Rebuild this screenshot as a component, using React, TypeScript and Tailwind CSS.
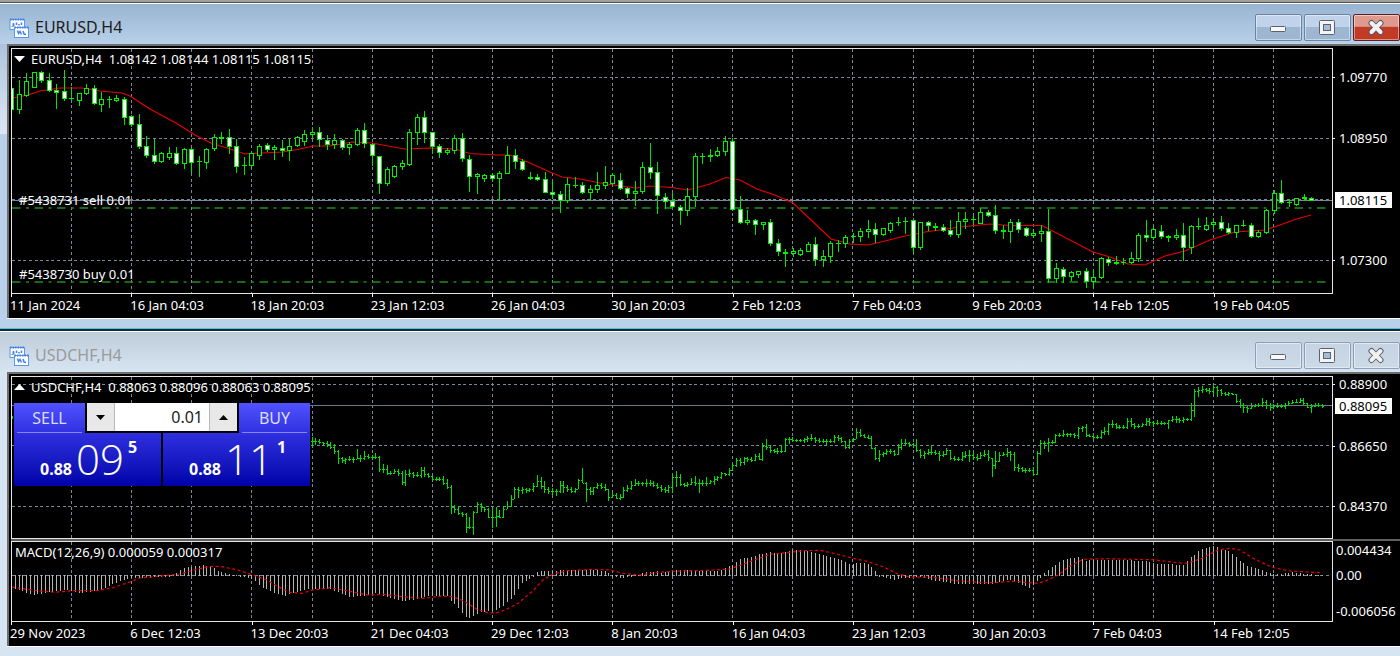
import React from "react";

type Point = [number, number];
/** high, body top, body bottom, low, filled */
type Candle = [number, number, number, number, 0 | 1];
/** high, low, close, in thirds of a chart unit */
type Bar = [number, number, number];

const CANDLES: Candle[] = [
  [61, 88, 109, 110, 1], [80, 94, 109, 113, 0], [73, 81, 95, 96, 0], [72, 72, 87, 87, 0],
  [71, 72, 80, 82, 1], [73, 80, 90, 91, 1], [84, 90, 92, 108, 1], [70, 91, 98, 100, 1],
  [87, 98, 98, 99, 0], [93, 93, 100, 105, 0], [84, 88, 93, 94, 0], [85, 88, 103, 104, 1],
  [92, 99, 104, 111, 0], [96, 99, 99, 107, 0], [95, 98, 100, 101, 0], [97, 99, 117, 124, 1],
  [115, 116, 124, 126, 1], [114, 124, 146, 148, 1], [136, 146, 155, 157, 1], [139, 155, 161, 163, 1],
  [152, 153, 161, 162, 0], [147, 153, 157, 159, 0], [147, 153, 163, 164, 1], [148, 149, 163, 168, 0],
  [148, 149, 162, 172, 1], [156, 161, 161, 176, 0], [148, 149, 162, 168, 0], [134, 137, 148, 150, 0],
  [132, 137, 138, 143, 0], [129, 137, 146, 153, 1], [139, 146, 166, 172, 1], [157, 165, 165, 174, 0],
  [152, 153, 165, 168, 0], [144, 146, 155, 159, 0], [143, 145, 149, 151, 1], [145, 147, 149, 159, 0],
  [140, 148, 150, 156, 1], [139, 146, 150, 160, 0], [136, 137, 145, 146, 0], [130, 134, 141, 145, 0],
  [127, 132, 134, 137, 0], [127, 132, 139, 146, 1], [135, 140, 144, 149, 1], [134, 140, 144, 148, 0],
  [139, 140, 147, 149, 1], [142, 144, 147, 154, 0], [128, 130, 144, 145, 0], [123, 130, 143, 147, 1],
  [143, 144, 155, 165, 1], [156, 156, 183, 193, 1], [167, 169, 183, 185, 0], [165, 166, 176, 177, 0],
  [160, 163, 166, 169, 0], [129, 132, 164, 165, 0], [114, 117, 132, 144, 0], [111, 117, 132, 142, 1],
  [132, 132, 146, 152, 1], [144, 146, 152, 157, 1], [148, 150, 152, 154, 0], [135, 138, 150, 153, 0],
  [133, 138, 158, 161, 1], [155, 159, 176, 191, 1], [173, 174, 176, 193, 0], [174, 175, 178, 181, 0],
  [173, 175, 178, 180, 1], [171, 173, 178, 200, 0], [146, 155, 173, 173, 0], [149, 155, 161, 168, 1],
  [159, 161, 169, 170, 1], [172, 177, 178, 179, 1], [174, 177, 179, 180, 1], [172, 179, 192, 192, 1],
  [181, 192, 194, 198, 1], [191, 194, 200, 212, 1], [178, 184, 200, 202, 0], [177, 185, 185, 187, 0],
  [182, 185, 192, 193, 1], [185, 189, 192, 200, 0], [172, 185, 189, 192, 0], [166, 182, 185, 188, 0],
  [173, 175, 183, 184, 0], [173, 180, 188, 189, 1], [187, 188, 193, 197, 1], [181, 191, 193, 205, 0],
  [162, 167, 191, 193, 0], [143, 167, 172, 178, 1], [162, 172, 195, 213, 1], [193, 197, 201, 208, 1],
  [193, 201, 206, 207, 1], [205, 207, 210, 224, 1], [188, 196, 210, 215, 0], [153, 156, 196, 206, 0],
  [153, 156, 156, 163, 0], [149, 155, 156, 161, 0], [147, 151, 155, 156, 0], [136, 141, 151, 155, 0],
  [138, 141, 209, 210, 1], [196, 209, 222, 223, 1], [210, 220, 222, 224, 0], [219, 220, 224, 234, 1],
  [222, 222, 224, 229, 0], [219, 222, 243, 245, 1], [239, 243, 251, 255, 1], [249, 252, 253, 266, 1],
  [248, 251, 253, 256, 0], [248, 250, 254, 255, 0], [242, 244, 251, 251, 0], [237, 244, 259, 265, 1],
  [250, 256, 259, 266, 0], [241, 243, 256, 262, 0], [240, 243, 243, 251, 0], [235, 237, 243, 247, 0],
  [233, 236, 236, 242, 0], [228, 231, 236, 241, 0], [220, 229, 231, 237, 0], [223, 229, 234, 242, 1],
  [228, 228, 234, 235, 0], [222, 223, 230, 232, 0], [217, 222, 222, 225, 0], [217, 221, 221, 233, 0],
  [220, 220, 247, 252, 1], [222, 222, 247, 249, 0], [221, 222, 225, 230, 1], [223, 226, 227, 230, 0],
  [224, 227, 230, 231, 1], [220, 230, 234, 236, 1], [212, 221, 234, 237, 0], [212, 219, 221, 228, 0],
  [216, 219, 219, 224, 0], [208, 212, 223, 223, 0], [210, 212, 215, 216, 1], [205, 215, 230, 233, 1],
  [225, 230, 231, 238, 1], [219, 222, 231, 242, 0], [219, 222, 229, 232, 1], [227, 228, 235, 236, 1],
  [229, 233, 235, 237, 0], [225, 231, 233, 241, 0], [209, 231, 278, 282, 1], [263, 268, 278, 282, 0],
  [267, 269, 276, 282, 1], [271, 272, 276, 280, 0], [271, 271, 274, 277, 0], [268, 271, 281, 287, 1],
  [269, 277, 281, 287, 0], [257, 258, 277, 278, 0], [257, 259, 262, 265, 1], [256, 262, 263, 264, 1],
  [258, 262, 262, 264, 0], [252, 258, 262, 263, 0], [233, 235, 258, 261, 0], [220, 235, 237, 241, 1],
  [227, 229, 237, 239, 0], [225, 231, 236, 238, 1], [235, 236, 237, 241, 1], [229, 235, 237, 239, 0],
  [223, 235, 247, 260, 1], [225, 226, 247, 253, 0], [218, 226, 226, 229, 0], [217, 225, 229, 230, 0],
  [218, 222, 224, 228, 0], [216, 222, 228, 230, 1], [223, 228, 232, 233, 1], [225, 225, 232, 237, 0],
  [220, 225, 225, 226, 0], [223, 225, 236, 237, 1], [230, 232, 236, 237, 0], [209, 210, 232, 233, 0],
  [190, 193, 210, 213, 0], [180, 193, 202, 203, 1], [199, 202, 202, 206, 0], [198, 198, 204, 205, 0],
  [194, 197, 198, 200, 1], [197, 198, 200, 200, 1],
];

const AVERAGE: Point[] = [
  [12, 98], [28, 95], [40, 91], [60, 88], [82, 88], [100, 91], [122, 93], [130, 96], [150, 109], [176, 123],
  [195, 135], [211, 143], [230, 149], [245, 154], [262, 153], [283, 152], [300, 149], [313, 146], [330, 146],
  [352, 142], [372, 143], [388, 146], [405, 149], [430, 148], [455, 149], [470, 153.5], [497, 155], [510, 155],
  [530, 163], [550, 172], [562, 177], [580, 179], [600, 183], [620, 186], [637, 188], [650, 186], [672, 187.5],
  [688, 190], [710, 184], [726, 177.5], [740, 180], [757, 189], [775, 195], [793, 203], [810, 219], [831, 239],
  [850, 244], [868, 245], [885, 241], [905, 236], [925, 232], [940, 230], [960, 227], [990, 224], [1010, 225.5],
  [1042, 225.5], [1070, 240], [1093, 252], [1110, 257], [1128, 264], [1145, 265], [1165, 256], [1185, 251],
  [1210, 240], [1235, 232], [1265, 230], [1280, 225], [1295, 219.5], [1311, 215],
];

const FIRST_BAR = 80;
const BARS: Bar[] = [
  [200, 230, 212], [205, 226, 214], [208, 223, 216], [215, 226, 220], [212, 230, 222],
  [217, 237, 230], [222, 253, 243], [240, 283, 265], [262, 278, 270], [265, 282, 268], [258, 272, 266],
  [260, 278, 266], [236, 268, 264], [255, 275, 265], [243, 270, 258], [252, 268, 262], [256, 270, 262],
  [250, 268, 260], [258, 307, 297], [282, 310, 298], [286, 315, 308], [303, 316, 309], [298, 312, 304],
  [296, 319, 310], [303, 346, 335], [300, 348, 312], [298, 322, 310], [305, 325, 314], [307, 322, 315],
  [292, 325, 300], [292, 322, 312], [308, 325, 318], [315, 332, 326], [320, 334, 327], [320, 334, 326],
  [318, 346, 340], [326, 356, 352], [345, 432, 410], [405, 430, 418], [408, 436, 430], [426, 442, 433],
  [430, 490, 470], [440, 477, 470], [424, 494, 427], [396, 428, 402], [400, 427, 410], [410, 426, 416],
  [414, 443, 440], [410, 475, 440], [412, 472, 438], [420, 445, 440], [412, 445, 418], [392, 418, 408],
  [376, 412, 388], [352, 388, 358], [352, 385, 360], [350, 372, 358], [355, 370, 360], [354, 366, 358],
  [340, 366, 348], [315, 350, 334], [320, 356, 348], [332, 370, 358], [350, 372, 362], [354, 376, 364],
  [358, 378, 362], [334, 370, 345], [334, 368, 350], [345, 366, 356], [352, 370, 364], [354, 370, 358],
  [326, 358, 330], [295, 340, 338], [336, 396, 358], [350, 375, 362], [350, 374, 352], [338, 358, 345],
  [338, 358, 350], [342, 362, 358], [356, 392, 380], [370, 385, 376], [370, 388, 384], [372, 390, 380],
  [352, 384, 360], [344, 365, 354], [332, 360, 345], [328, 348, 340], [334, 348, 340], [335, 348, 340],
  [328, 350, 340], [330, 348, 340], [332, 352, 344], [338, 356, 350], [345, 367, 358], [350, 368, 360],
  [346, 368, 352], [315, 370, 320], [303, 350, 320], [312, 348, 342], [338, 350, 345], [336, 350, 342],
  [324, 346, 336], [318, 348, 340], [326, 368, 338], [330, 348, 340], [322, 348, 338], [330, 342, 334],
  [318, 344, 326], [318, 332, 322], [305, 328, 310], [308, 318, 312], [294, 318, 300], [280, 302, 285],
  [264, 292, 270], [264, 287, 275], [260, 286, 264], [260, 275, 268], [260, 276, 270], [252, 272, 258],
  [250, 270, 268], [220, 272, 228], [208, 240, 230], [225, 248, 240], [236, 250, 244], [234, 252, 242],
  [225, 250, 242], [205, 245, 208], [200, 222, 207], [202, 215, 210], [206, 216, 211], [206, 216, 211],
  [203, 218, 207], [198, 216, 205], [193, 212, 204], [200, 218, 210], [205, 218, 213], [208, 218, 214],
  [206, 228, 212], [206, 220, 212], [196, 220, 200], [194, 212, 205], [202, 218, 213], [212, 237, 232],
  [206, 237, 212], [203, 216, 206], [174, 208, 186], [178, 202, 194], [192, 204, 200], [194, 206, 203],
  [198, 236, 235], [230, 270, 265], [240, 275, 252], [246, 262, 250], [236, 256, 242], [238, 252, 243],
  [240, 258, 252], [222, 254, 232], [208, 240, 220], [208, 226, 220], [216, 230, 223], [218, 228, 224],
  [208, 246, 240], [236, 264, 256], [242, 266, 248], [236, 254, 245], [225, 254, 246], [240, 256, 250],
  [242, 272, 256], [244, 262, 252], [234, 256, 240], [240, 270, 265], [258, 274, 267], [260, 272, 266],
  [246, 272, 258], [242, 264, 254], [240, 275, 256], [250, 270, 260], [252, 272, 263], [246, 268, 254],
  [240, 262, 253], [240, 274, 262], [265, 320, 285], [242, 297, 272], [246, 276, 254], [246, 258, 252],
  [235, 260, 245], [243, 272, 252], [245, 302, 290], [282, 305, 295], [292, 306, 300], [295, 308, 300],
  [294, 306, 300], [294, 314, 312], [242, 316, 250], [210, 255, 220], [214, 238, 220], [204, 246, 216],
  [210, 222, 215], [193, 220, 196], [188, 200, 195], [180, 200, 193], [188, 202, 192], [188, 200, 192],
  [188, 204, 196], [170, 206, 175], [168, 186, 172], [162, 200, 196], [192, 202, 198], [193, 206, 200],
  [195, 206, 201], [180, 206, 186], [172, 196, 184], [158, 195, 162], [150, 175, 163], [160, 178, 172],
  [164, 178, 170], [166, 178, 170], [145, 178, 152], [145, 170, 162], [158, 176, 167], [162, 174, 167],
  [158, 172, 163], [145, 168, 153], [145, 168, 156], [152, 172, 158], [150, 166, 158], [154, 164, 159],
  [156, 166, 160], [150, 176, 150], [138, 156, 146], [138, 158, 148], [144, 160, 150], [140, 158, 148],
  [144, 153, 148], [100, 153, 120], [58, 140, 63], [50, 82, 60], [48, 68, 58], [54, 66, 60],
  [54, 72, 62], [45, 72, 50], [48, 80, 60], [57, 78, 70], [65, 78, 72], [66, 78, 70], [68, 76, 72],
  [71, 100, 92], [86, 115, 105], [100, 130, 112], [108, 128, 115], [100, 118, 108], [102, 112, 106],
  [98, 112, 105], [83, 112, 95], [90, 116, 106], [100, 122, 112], [102, 118, 108], [100, 114, 108],
  [102, 114, 108], [100, 118, 105], [93, 108, 98], [90, 102, 95], [88, 100, 95], [85, 100, 90],
  [84, 106, 100], [98, 115, 110], [102, 128, 108], [98, 112, 105], [99, 110, 104], [102, 114, 108],
];

const HISTOGRAM: Point[] = [
  [11, 587], [34, 594], [50, 591], [66, 589], [77, 592], [87, 591], [100, 589], [110, 584], [120, 580],
  [133, 577], [167, 576], [175, 574], [183, 568], [196, 566], [204, 565], [212, 567], [220, 572], [233, 575],
  [247, 576], [255, 580], [260, 585], [273, 592], [285, 594.5], [293, 592], [306, 588], [330, 588], [350, 596],
  [363, 595], [376, 592], [390, 597], [403, 600], [417, 598], [430, 595], [447, 595], [453, 602], [466, 616],
  [470, 617], [480, 611], [496, 609], [503, 605], [512, 597], [522, 582], [530, 577], [534, 575.5], [537, 572],
  [543, 571], [570, 570], [590, 570], [605, 571], [612, 575.6], [620, 577], [637, 575], [643, 572.7], [658, 571],
  [661, 573], [677, 570], [717, 571], [723, 569], [733, 564.3], [740, 559.3], [757, 555], [768, 552], [780, 553.7],
  [790, 550.3], [803, 550], [813, 552.3], [827, 556.7], [840, 560], [849, 564.3], [857, 562.7], [867, 563.3],
  [873, 568.3], [878, 575.3], [893, 578.7], [903, 577], [920, 576], [930, 579], [943, 581], [957, 583], [992, 582.7],
  [1008, 579], [1013, 580], [1030, 587.7], [1037, 580], [1041, 576], [1044, 573], [1056, 564], [1063, 560],
  [1078, 556.7], [1085, 560.7], [1103, 559.7], [1123, 560], [1147, 561.3], [1157, 563.7], [1183, 565],
  [1190, 558.3], [1198, 550.7], [1214, 545.3], [1220, 549], [1230, 551.7], [1240, 560.7], [1248, 566.7],
  [1260, 569.3], [1270, 573.3], [1280, 574], [1293, 572.3], [1303, 574], [1322, 575],
];

const SIGNAL: Point[] = [
  [12, 587], [37, 590.7], [55, 592.3], [73, 590.7], [97, 590.7], [113, 587.7], [127, 583], [140, 578], [160, 576],
  [180, 574], [197, 569.3], [210, 566.3], [220, 566.3], [238, 570], [253, 575], [267, 580], [278, 586.7],
  [290, 592.3], [302, 593.3], [313, 590], [330, 587.7], [350, 591.3], [368, 595], [383, 594.3], [403, 596.7],
  [423, 598.3], [443, 596], [453, 596.7], [465, 601.7], [477, 609.3], [487, 612.3], [495, 613.3], [505, 610],
  [518, 603.3], [532, 591.7], [543, 580], [553, 574], [567, 570.7], [593, 569.3], [610, 570], [623, 573.3],
  [640, 575], [658, 572.3], [680, 571], [710, 570.3], [730, 569], [750, 561.7], [770, 554.3], [787, 552.7],
  [803, 550.7], [820, 550.3], [837, 554], [853, 558.3], [867, 561.3], [883, 566.7], [898, 574], [910, 577],
  [933, 577.3], [957, 580.7], [977, 582.3], [993, 582.7], [1013, 581.3], [1037, 583.3], [1045, 581.3], [1058, 575],
  [1068, 567.3], [1083, 559.3], [1107, 558.7], [1153, 559.7], [1177, 562.7], [1187, 563.3], [1202, 558.3],
  [1218, 550], [1230, 548.3], [1240, 550], [1253, 558.3], [1272, 567.3], [1290, 571], [1322, 572.7],
];

const GRID = Array.from({ length: 21 }, (_, i) => Math.floor(71.6 + i * 60.1));

function valueAt(points: Point[], x: number) {
  const i = points.findIndex(([px]) => px >= x);
  if (i <= 0) return points[i === 0 ? 0 : points.length - 1][1];
  const [x0, y0] = points[i - 1];
  const [x1, y1] = points[i];
  return y0 + ((y1 - y0) * (x - x0)) / (x1 - x0);
}

const toPath = (points: Point[]) => "M" + points.map((p) => p.join(" ")).join("L");

function GridLines({ top, bottom, rows }: { top: number; bottom: number; rows: number[] }) {
  return (
    <g stroke="#778899" strokeDasharray="3 2.64" shapeRendering="crispEdges">
      {GRID.map((x) => (
        <path key={x} d={`M${x + 0.5} ${top}V${bottom}`} />
      ))}
      {rows.map((y) => (
        <path key={y} d={`M12 ${y + 0.5}H1332`} />
      ))}
    </g>
  );
}

function CandleChart() {
  return (
    <svg className="block h-full w-full" viewBox="12 49 1320 244" preserveAspectRatio="none" aria-hidden="true">
      <GridLines top={49} bottom={293} rows={[77, 138, 199, 260]} />
      <path d="M12 200.5H1332" stroke="#778899" shapeRendering="crispEdges" />
      <g stroke="#1f8f1f" strokeWidth="1.5" strokeDasharray="8.5 5.6 2.8 5.6">
        <path d="M12 208H1328" />
        <path d="M12 282H1328" />
      </g>
      <path d={toPath(AVERAGE)} fill="none" stroke="#e80000" strokeWidth="1.2" />
      <g shapeRendering="crispEdges">
        {CANDLES.map(([high, top, bottom, low, filled], i) => {
          const x = Math.floor(11.5 + i * 7.515);
          const h = bottom - top + 1;
          return (
            <g key={i}>
              <rect x={x} y={high} width="1" height={low - high + 1} fill="#00e400" />
              <rect x={x - 2} y={top} width="5" height={h} fill="#00f000" />
              {h > 2 && <rect x={x - 1} y={top + 1} width="3" height={h - 2} fill={filled ? "#fff" : "#000"} />}
            </g>
          );
        })}
      </g>
    </svg>
  );
}

function BarChart() {
  return (
    <svg className="block h-full w-full" viewBox="12 377 1320 161" preserveAspectRatio="none" aria-hidden="true">
      <GridLines top={377} bottom={538} rows={[384, 445, 506]} />
      <path d="M12 405.5H1332" stroke="#66788a" shapeRendering="crispEdges" />
      <g shapeRendering="crispEdges" fill="#00e000">
        <rect x="11" y="416" width="2" height="3" />
        {BARS.map(([high, low, close], i) => {
          const x = Math.floor(11.5 + (FIRST_BAR + i) * 3.757);
          const open = i > 0 ? BARS[i - 1][2] : close;
          const y = (v: number) => Math.round(370 + v / 3);
          return (
            <g key={i}>
              <rect x={x} y={y(high)} width="1" height={y(low) - y(high)} />
              <rect x={x - 1} y={y(Math.min(Math.max(open, high), low - 2))} width="1" height="1" />
              <rect x={x + 1} y={y(close)} width="1" height="1" />
            </g>
          );
        })}
      </g>
    </svg>
  );
}

function MacdChart() {
  return (
    <svg className="block h-full w-full" viewBox="12 542 1320 79" preserveAspectRatio="none" aria-hidden="true">
      <GridLines top={542} bottom={621} rows={[575]} />
      <g fill="#b4b4b4" shapeRendering="crispEdges">
        {Array.from({ length: 350 }, (_, i) => {
          const x = Math.floor(11.5 + i * 3.757);
          const y = Math.round(valueAt(HISTOGRAM, x));
          return <rect key={i} x={x} y={Math.min(y, 575)} width="1" height={Math.abs(y - 575) + 1} />;
        })}
      </g>
      <path d={toPath(SIGNAL)} fill="none" stroke="#f00000" strokeWidth="1.2" strokeDasharray="3 2.6" />
    </svg>
  );
}

function WindowIcon() {
  return (
    <svg width="20" height="20" viewBox="0 0 20 20" fill="#fff" aria-hidden="true">
      <rect x="1" y="1.5" width="14.5" height="10" stroke="#5a96f0" />
      <path d="M1 1.5H15.5" stroke="#3f7fe8" strokeWidth="2" strokeDasharray="1.5 1" />
      <path d="M4.5 5V8.500M3.500 7H5.500M7.500 4.500V7M10 6V7.500M12.500 4.500V7" stroke="#3f7fe8" strokeWidth="1.5" />
      <path d="M2.500 8.500H4.500" stroke="#3fbf7f" />
      <rect x="5.500" y="9.500" width="14" height="10" stroke="#5a96f0" />
      <path d="M5.500 9.500H19.500" stroke="#3f7fe8" strokeWidth="2" strokeDasharray="1.500 1" />
      <path d="M8.500 12.500L9.500 15.500L11 13.500L12.500 16.500M14 13L15 16L17 16.500" fill="none" stroke="#3f7fe8" strokeWidth="1.5" />
    </svg>
  );
}

function ControlIcon({ kind }: { kind: "minimize" | "maximize" | "close" }) {
  return (
    <svg width="19" height="17" viewBox="0 0 19 17" fill="none" aria-hidden="true">
      {kind === "minimize" && (
        <rect x="1.500" y="7.500" width="15" height="5" rx="1" fill="#f8f8f8" stroke="#5a6270" />
      )}
      {kind === "maximize" && (
        <>
          <rect x="1.500" y="1.500" width="15" height="14" rx="1" fill="#f4f4f4" stroke="#5a6270" />
          <rect x="5.500" y="5.500" width="7" height="6" fill="#a3bdd8" stroke="#5a6270" />
        </>
      )}
      {kind === "close" && (
        <>
          <path d="M4.500 4L13.500 13M13.500 4L4.500 13" stroke="#565c68" strokeWidth="6" strokeLinecap="round" />
          <path d="M4.500 4L13.500 13M13.500 4L4.500 13" stroke="#f2f2f2" strokeWidth="4" strokeLinecap="round" />
        </>
      )}
    </svg>
  );
}

function TitleBar({ title, active }: { title: string; active: boolean }) {
  const box = "flex h-[27px] w-[47px] items-center justify-center rounded-xs border shadow-[inset_0_0_0_1px_rgba(255,255,255,0.45)]";
  const plain = active
    ? "border-[#6b84a6] bg-linear-to-b from-[#c0d3ea] from-50% to-[#9db6d2] to-50%"
    : "border-[#8f9fb4] bg-linear-to-b from-[#c6d3e2] to-[#ccdae8]";
  const close = active
    ? "border-[#5f1f1c] bg-linear-to-b from-[#df9a8e] from-45% to-[#c03a26] to-50%"
    : plain;
  return (
    <header
      className={`flex h-10 items-end justify-between pb-[3px] pl-[9px] ${
        active
          ? "bg-linear-to-b from-[#99b4d1] to-[#b9d1ea] text-[#1c1c20]"
          : "bg-linear-to-b from-[#bfcddb] to-[#d7e4f2] text-[#9a9a9a]"
      }`}
    >
      <h2 className="flex items-center gap-[6px] text-base leading-[27px]">
        <WindowIcon />
        {title}
      </h2>
      <div className="flex gap-[2px]">
        <button type="button" aria-label="Minimize" className={`${box} ${plain}`}>
          <ControlIcon kind="minimize" />
        </button>
        <button type="button" aria-label="Maximize" className={`${box} ${plain}`}>
          <ControlIcon kind="maximize" />
        </button>
        <button type="button" aria-label="Close" className={`${box} ${close}`}>
          <ControlIcon kind="close" />
        </button>
      </div>
    </header>
  );
}

function TimeAxis({ labels }: { labels: string[] }) {
  return (
    <div className="flex">
      <ol className="-ml-px grid h-6 min-w-0 flex-1 grid-cols-11 whitespace-nowrap">
        {labels.map((label, i) => (
          <li key={i}>
            <span className="ml-px block h-[3px] w-px bg-white" />
            <span className="block leading-4">{label}</span>
          </li>
        ))}
      </ol>
      <div className="w-[67px]" />
    </div>
  );
}

function Tick({ children }: { children: string }) {
  return (
    <li className="flex h-4 items-center gap-1 leading-4">
      <span className="h-px w-[2px] bg-white" />
      {children}
    </li>
  );
}

function Quote({ base, big, small }: { base: string; big: string; small: string }) {
  return (
    <span className="flex h-[53px] w-full items-baseline gap-1 pl-[26px] text-white">
      <span className="text-base leading-5 font-bold">{base}</span>
      <span className="font-['Open_Sans','Noto_Sans',sans-serif] text-[42px] leading-[52px] font-light">{big}</span>
      <span className="self-start pt-1 text-base leading-5 font-bold">{small}</span>
    </span>
  );
}

function TradePanel() {
  const side = "flex h-[83px] min-w-0 flex-1 flex-col bg-linear-to-b from-[#5252ff] via-[#2c2cdc] via-40% to-[#0000a8]";
  const caption = "mx-[3px] h-[30px] w-[65px] border-b border-[#8585f5] text-center text-base leading-[30px] text-[#dcdcff]";
  return (
    <div className="absolute top-[26px] left-[2px] flex w-[296px] gap-[2px] bg-black">
      <button type="button" className={`${side} items-start`}>
        <span className={caption}>SELL</span>
        <Quote base="0.88" big="09" small="5" />
      </button>
      <button type="button" className={`${side} items-end`}>
        <span className={caption}>BUY</span>
        <Quote base="0.88" big="11" small="1" />
      </button>
      <div className="absolute top-0 left-[71px] flex h-[30px] w-[154px] border-x-2 border-b-2 border-black bg-white">
        <button type="button" aria-label="Decrease volume" className="flex w-7 items-center justify-center border-r border-[#b8b8b8] bg-[#e8e8e8]">
          <svg width="9" height="5" viewBox="0 0 9 5" aria-hidden="true">
            <path d="M0 0H9L4.500 5Z" fill="#000" />
          </svg>
        </button>
        <input aria-label="Volume" defaultValue="0.01" className="min-w-0 flex-1 bg-white pr-[6px] text-right text-base text-[#222]" />
        <button type="button" aria-label="Increase volume" className="flex w-7 items-center justify-center border-l border-[#b8b8b8] bg-[#e8e8e8]">
          <svg width="9" height="5" viewBox="0 0 9 5" aria-hidden="true">
            <path d="M0 5H9L4.500 0Z" fill="#000" />
          </svg>
        </button>
      </div>
    </div>
  );
}

const EUR_TIMES = ["11 Jan 2024", "16 Jan 04:03", "18 Jan 20:03", "23 Jan 12:03", "26 Jan 04:03", "30 Jan 20:03", "2 Feb 12:03", "7 Feb 04:03", "9 Feb 20:03", "14 Feb 12:05", "19 Feb 04:05"];
const CHF_TIMES = ["29 Nov 2023", "6 Dec 12:03", "13 Dec 20:03", "21 Dec 04:03", "29 Dec 12:03", "8 Jan 20:03", "16 Jan 04:03", "23 Jan 12:03", "30 Jan 20:03", "7 Feb 04:03", "14 Feb 12:05"];

export default function App() {
  return (
    <main className="bg-[#b9d1ea] font-['Noto_Sans',sans-serif] text-[13px]">
      <div className="h-[2px] bg-[#a0a0a0]" />
      <div className="h-px bg-[#505050]" />

      <section className="border-t border-white bg-linear-to-b from-[#99b4d1] via-[#dde8f5] via-40% to-[#b9d1ea] to-40%">
        <TitleBar title="EURUSD,H4" active />
        <div className="ml-[7px] border-t-2 border-l-2 border-[#6e6e6e] bg-black pt-[2px] pl-[2px] text-white">
          <div className="flex">
            <div className="relative h-[246px] min-w-0 flex-1 border border-[#e4e4e4]">
              <CandleChart />
              <h3 className="absolute top-[2px] left-[2px] flex items-center gap-[6px] leading-4 whitespace-pre">
                <svg width="11" height="6" viewBox="0 0 11 6" aria-hidden="true">
                  <path d="M0 0H11L5.500 6Z" fill="#fff" />
                </svg>
                {"EURUSD,H4  1.08142 1.08144 1.08115 1.08115"}
              </h3>
              <span className="absolute top-[143px] left-[7px] leading-4">#5438731 sell 0.01</span>
              <span className="absolute top-[217px] left-[7px] leading-4">#5438730 buy 0.01</span>
            </div>
            <ul className="w-[67px] pt-[21px]">
              <Tick>1.09770</Tick>
              <li className="h-[45px]" aria-hidden="true" />
              <Tick>1.08950</Tick>
              <li className="mt-[46px] ml-[2px] h-4 w-[57px] bg-white pl-1 leading-4 text-black">1.08115</li>
              <li className="h-11" aria-hidden="true" />
              <Tick>1.07300</Tick>
            </ul>
          </div>
          <TimeAxis labels={EUR_TIMES} />
        </div>
        <div className="ml-[7px] h-px bg-white" />
        <div className="h-[9px] bg-[#b9d1ea]" />
      </section>
      <div className="h-px bg-[#2fd0e8]" />
      <div className="h-[2px] bg-[#20242c]" />

      <section className="border-t border-white bg-[#d7e4f2]">
        <TitleBar title="USDCHF,H4" active={false} />
        <div className="ml-[7px] border-t-2 border-l-2 border-[#6e6e6e] bg-black pt-[2px] pl-[2px] text-white">
          <div className="flex">
            <div className="relative h-[163px] min-w-0 flex-1 border border-[#e4e4e4]">
              <BarChart />
              <h3 className="absolute top-[2px] left-[2px] flex items-center gap-[6px] leading-4 whitespace-pre">
                <svg width="11" height="6" viewBox="0 0 11 6" aria-hidden="true">
                  <path d="M0 6H11L5.500 0Z" fill="#fff" />
                </svg>
                {"USDCHF,H4  0.88063 0.88096 0.88063 0.88095"}
              </h3>
              <TradePanel />
            </div>
            <ul className="w-[67px]">
              <Tick>0.88900</Tick>
              <li className="mt-[6px] ml-[2px] h-4 w-[57px] bg-white pl-1 leading-4 text-black">0.88095</li>
              <li className="h-6" aria-hidden="true" />
              <Tick>0.86650</Tick>
              <li className="h-11" aria-hidden="true" />
              <Tick>0.84370</Tick>
            </ul>
          </div>
          <div className="h-[2px] bg-[#606060]" />
          <div className="flex">
            <div className="relative h-[81px] min-w-0 flex-1 border border-[#e4e4e4]">
              <MacdChart />
              <h3 className="absolute top-[2px] left-[3px] leading-4">MACD(12,26,9) 0.000059 0.000317</h3>
            </div>
            <ul className="w-[67px] pl-[3px] leading-4">
              <li className="pt-px">0.004434</li>
              <li className="pt-[9px]">0.00</li>
              <li className="pt-5">-0.006056</li>
            </ul>
          </div>
          <TimeAxis labels={CHF_TIMES} />
        </div>
        <div className="ml-[7px] h-px bg-white" />
        <div className="h-[9px]" />
      </section>
    </main>
  );
}
